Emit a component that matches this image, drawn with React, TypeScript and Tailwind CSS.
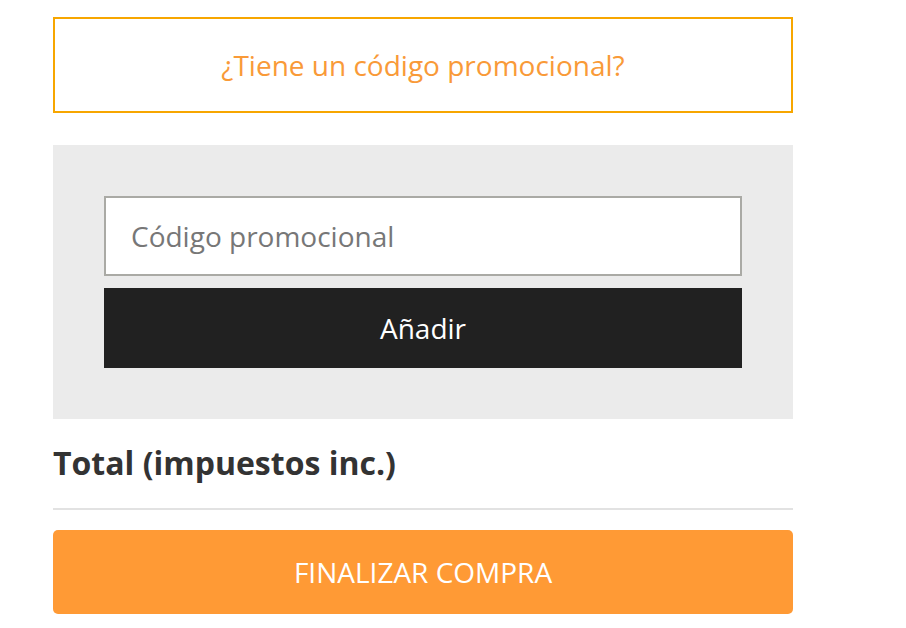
export default function App() {
  return (
    <div
      className="min-h-screen bg-white pt-[17px] pl-[53px]"
      style={{ fontFamily: '"Open Sans", "Liberation Sans", sans-serif' }}
    >
      <div className="w-[740px]">
        {/* Promo code toggle */}
        <div className="flex h-[96px] items-center justify-center border-2 border-[#f7a600]">
          <span className="text-[28px] text-[#f99a38]">¿Tiene un código promocional?</span>
        </div>

        {/* Promo code form */}
        <div className="mt-[32px] flex flex-col gap-[12px] bg-[#ebebeb] p-[51px]">
          <input
            type="text"
            placeholder="Código promocional"
            className="h-[80px] w-full border-2 border-[#aaaaa5] bg-white px-[25px] text-[28px] text-[#333] outline-none placeholder:text-[#777]"
          />
          <button className="h-[80px] w-full bg-[#212121] text-[28px] text-white">Añadir</button>
        </div>

        {/* Total */}
        <div className="border-b-2 border-[#e2e2e2] pt-[24px] pb-[26px]">
          <h3 className="text-[32px] font-bold leading-[39px] text-[#333]">Total (impuestos inc.)</h3>
        </div>

        {/* Checkout */}
        <button className="mt-[20px] h-[84px] w-full rounded-[5px] bg-[#ff9a35] text-[28px] text-white">
          FINALIZAR COMPRA
        </button>
      </div>
    </div>
  );
}
